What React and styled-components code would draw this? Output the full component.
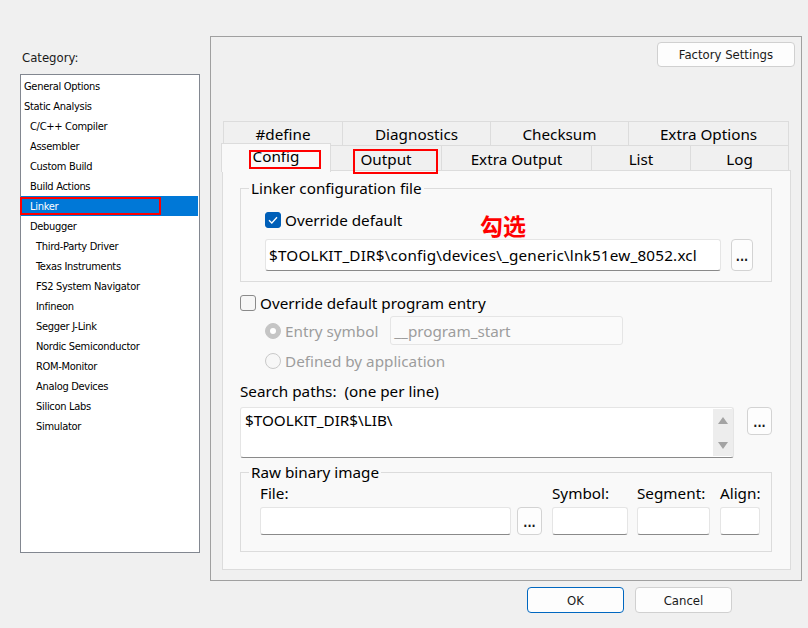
import React from 'react';
import styled, { createGlobalStyle } from 'styled-components';

const GlobalStyle = createGlobalStyle`
   html, body {
      margin: 0;
      padding: 0;
      background: #f0f0f0;
      width: 808px;
      height: 628px;
      overflow: hidden;
   }
   * {
      box-sizing: border-box;
   }
`;

const uiFont = `'Noto Sans', 'Open Sans', sans-serif`;
const dlgFont = `'DejaVu Sans Condensed', 'DejaVu Sans', 'Liberation Sans', sans-serif`;

const categories = [
   { name: 'General Options', level: 0 },
   { name: 'Static Analysis', level: 0 },
   { name: 'C/C++ Compiler', level: 1 },
   { name: 'Assembler', level: 1 },
   { name: 'Custom Build', level: 1 },
   { name: 'Build Actions', level: 1 },
   { name: 'Linker', level: 1, selected: true, marked: true },
   { name: 'Debugger', level: 1 },
   { name: 'Third-Party Driver', level: 2 },
   { name: 'Texas Instruments', level: 2 },
   { name: 'FS2 System Navigator', level: 2 },
   { name: 'Infineon', level: 2 },
   { name: 'Segger J-Link', level: 2 },
   { name: 'Nordic Semiconductor', level: 2 },
   { name: 'ROM-Monitor', level: 2 },
   { name: 'Analog Devices', level: 2 },
   { name: 'Silicon Labs', level: 2 },
   { name: 'Simulator', level: 2 },
];

const backTabs = [
   { label: '#define', width: 119 },
   { label: 'Diagnostics', width: 148 },
   { label: 'Checksum', width: 138 },
   { label: 'Extra Options', width: 160 },
];

const frontTabs = [
   { label: 'Config', width: 107, selected: true, mark: { left: 27, top: 6, width: 72, height: 19 } },
   { label: 'Output', width: 111, mark: { left: 22, top: 3, width: 85, height: 25 } },
   { label: 'Extra Output', width: 150 },
   { label: 'List', width: 99 },
   { label: 'Log', width: 98 },
];

const App = () => {
   return (
      <>
         <GlobalStyle />
         <Dialog>
            <LeftColumn>
               <CategoryLabel>Category:</CategoryLabel>
               <CategoryList>
                  {categories.map((item, index) => (
                     <CategoryItem key={index} $level={item.level} $selected={item.selected}>
                        {item.name}
                        {item.marked && <RedMark style={{ left: -1, top: 1, width: 141, height: 18 }} />}
                     </CategoryItem>
                  ))}
               </CategoryList>
            </LeftColumn>

            <Panel>
               <TopBar>
                  <DlgButton $width={138}>Factory Settings</DlgButton>
               </TopBar>

               <TabArea>
                  <TabRow>
                     {backTabs.map((tab) => (
                        <Tab key={tab.label} $width={tab.width} $back>
                           {tab.label}
                        </Tab>
                     ))}
                  </TabRow>
                  <TabRow>
                     {frontTabs.map((tab) => (
                        <Tab key={tab.label} $width={tab.width} $selected={tab.selected}>
                           {tab.label}
                           {tab.mark && <RedMark style={tab.mark} />}
                        </Tab>
                     ))}
                  </TabRow>

                  <TabContent>
                     <GroupBox>
                        <Legend>Linker configuration file</Legend>
                        <CheckRow $indent={24} $mt={12}>
                           <CheckBox $checked>
                              <svg width='10' height='8' viewBox='0 0 10 8'>
                                 <path d='M1 4.2 L3.8 7 L9 1.2' fill='none' stroke='#fff' strokeWidth='1.3' />
                              </svg>
                           </CheckBox>
                           <span>Override default</span>
                           <Annotation>勾选</Annotation>
                        </CheckRow>
                        <FieldRow $indent={24} $mt={9}>
                           <TextInput $width={456} $height={32} $spacing={0.2}>
                              $TOOLKIT_DIR$\config\devices\_generic\lnk51ew_8052.xcl
                           </TextInput>
                           <DotsButton $height={32} $width={22} $ml={10}>...</DotsButton>
                        </FieldRow>
                     </GroupBox>

                     <CheckRow $mt={11}>
                        <CheckBox />
                        <span>Override default program entry</span>
                     </CheckRow>

                     <OptionRow $mt={3}>
                        <Radio $on />
                        <OptionText>Entry symbol</OptionText>
                        <TextInput $width={233} $height={29} $disabled $ml={12}>
                           __program_start
                        </TextInput>
                     </OptionRow>
                     <OptionRow $mt={6} $height={20}>
                        <Radio />
                        <OptionText>Defined by application</OptionText>
                     </OptionRow>

                     <PlainLabel $mt={10}>Search paths:&nbsp; (one per line)</PlainLabel>
                     <FieldRow $mt={6} $align='flex-start'>
                        <PathBox>
                           <PathText>$TOOLKIT_DIR$\LIB\</PathText>
                           <ScrollBar>
                              <Arrow $up />
                              <Arrow />
                           </ScrollBar>
                        </PathBox>
                        <DotsButton $height={28} $width={25} $ml={13}>...</DotsButton>
                     </FieldRow>

                     <GroupBox $mt={4} $pb={16}>
                        <Legend>Raw binary image</Legend>
                        <RawGrid>
                           <PlainLabel>File:</PlainLabel>
                           <span />
                           <PlainLabel>Symbol:</PlainLabel>
                           <PlainLabel>Segment:</PlainLabel>
                           <PlainLabel>Align:</PlainLabel>
                           <TextInput $width={251} $height={28} />
                           <DotsButton $height={28} $width={25}>...</DotsButton>
                           <TextInput $width={76} $height={28} />
                           <TextInput $width={73} $height={28} />
                           <TextInput $width={40} $height={28} />
                        </RawGrid>
                     </GroupBox>
                  </TabContent>
               </TabArea>
            </Panel>

            <Footer>
               <DlgButton $width={97} $height={26} $default>OK</DlgButton>
               <DlgButton $width={97} $height={26}>Cancel</DlgButton>
            </Footer>
         </Dialog>
      </>
   );
};

const Dialog = styled.div`
   display: grid;
   grid-template-columns: 180px 592px;
   grid-template-rows: 545px auto;
   column-gap: 10px;
   padding: 36px 0 0 20px;
   font-family: ${uiFont};
   color: #000;
`;

const LeftColumn = styled.div`
   display: flex;
   flex-direction: column;
`;

const CategoryLabel = styled.div`
   font-family: ${dlgFont};
   font-size: 13px;
   line-height: 16px;
   margin: 14px 0 8px 2px;
   color: #1a1a1a;
`;

const CategoryList = styled.div`
   height: 479px;
   background: #fff;
   border: 1px solid #828790;
   padding: 1px 1px 0 0;
`;

const CategoryItem = styled.div`
   position: relative;
   height: 20px;
   line-height: 20px;
   padding-top: 1px;
   font-family: ${dlgFont};
   font-size: 11px;
   letter-spacing: -0.3px;
   padding-left: ${(p) => 3 + p.$level * 6}px;
   background: ${(p) => (p.$selected ? '#0078d7' : 'transparent')};
   color: ${(p) => (p.$selected ? '#fff' : '#000')};
   white-space: nowrap;
`;

const RedMark = styled.span`
   position: absolute;
   border: 2px solid #ff0000;
   pointer-events: none;
   z-index: 3;
`;

const Panel = styled.div`
   display: flex;
   flex-direction: column;
   border: 1px solid #a0a0a0;
   background: #f0f0f0;
   padding: 5px 6px 10px 11px;
`;

const TopBar = styled.div`
   display: flex;
   justify-content: flex-end;
   margin-bottom: 55px;
`;

const DlgButton = styled.div`
   width: ${(p) => p.$width}px;
   height: ${(p) => p.$height || 25}px;
   display: flex;
   align-items: center;
   justify-content: center;
   font-family: ${dlgFont};
   font-size: 13px;
   color: #1a1a1a;
   background: #fdfdfd;
   border: 1px solid ${(p) => (p.$default ? '#0067c0' : '#d0d0d0')};
   border-radius: 4px;
`;

const TabArea = styled.div`
   display: flex;
   flex-direction: column;
   flex: 1;
   margin-right: 4px;
`;

const TabRow = styled.div`
   display: flex;
   padding-left: 1px;
   margin-top: -1px;
   position: relative;
   &:last-of-type {
      z-index: 2;
   }
`;

const Tab = styled.div`
   position: relative;
   width: ${(p) => p.$width + (p.$selected ? 3 : 1)}px;
   height: ${(p) => (p.$selected ? 29 : p.$back ? 25 : 26)}px;
   margin: ${(p) => (p.$selected ? '-2px -1px -1px -2px' : '0 -1px 0 0')};
   display: flex;
   align-items: center;
   justify-content: center;
   padding-bottom: ${(p) => (p.$selected ? 4 : 0)}px;
   padding-top: ${(p) => (!p.$selected && !p.$back ? 2 : 0)}px;
   font-size: 15.25px;
   background: ${(p) => (p.$selected ? '#f9f9f9' : '#f0f0f0')};
   border: 1px solid #dcdcdc;
   border-bottom: ${(p) => (p.$selected ? 'none' : '1px solid #dcdcdc')};
   z-index: ${(p) => (p.$selected ? 2 : 1)};
`;

const TabContent = styled.div`
   flex: 1;
   margin-top: -1px;
   background: #f9f9f9;
   border: 1px solid #dcdcdc;
   padding: 7px 18px 0 17px;
   display: flex;
   flex-direction: column;
   font-size: 15.25px;
`;

const GroupBox = styled.fieldset`
   margin: ${(p) => p.$mt || 0}px 0 0 0;
   padding: 0 18px ${(p) => p.$pb || 10}px 0;
   border: 1px solid #dcdcdc;
   min-width: 0;
`;

const Legend = styled.legend`
   margin-left: 8px;
   padding: 0 2px;
   font-size: 15.25px;
   line-height: 20px;
`;

const CheckRow = styled.div`
   position: relative;
   display: flex;
   align-items: center;
   gap: 4px;
   height: 20px;
   margin-top: ${(p) => p.$mt || 0}px;
   padding-left: ${(p) => p.$indent || 0}px;
`;

const CheckBox = styled.span`
   width: 16px;
   height: 16px;
   flex: none;
   display: flex;
   align-items: center;
   justify-content: center;
   border-radius: 3px;
   background: ${(p) => (p.$checked ? '#005fb8' : '#f6f6f6')};
   border: 1px solid ${(p) => (p.$checked ? '#005fb8' : '#8a8a8a')};
`;

const Annotation = styled.span`
   position: absolute;
   left: 239px;
   top: 1px;
   font-family: 'Noto Sans CJK SC', sans-serif;
   font-weight: 700;
   font-size: 23px;
   line-height: 28px;
   color: #ff0000;
`;

const FieldRow = styled.div`
   display: flex;
   align-items: ${(p) => p.$align || 'center'};
   margin-top: ${(p) => p.$mt || 0}px;
   padding-left: ${(p) => p.$indent || 0}px;
`;

const TextInput = styled.div`
   width: ${(p) => p.$width}px;
   height: ${(p) => p.$height}px;
   margin-left: ${(p) => p.$ml || 0}px;
   flex: none;
   display: flex;
   align-items: center;
   padding-left: 3px;
   white-space: nowrap;
   overflow: hidden;
   font-size: 15.25px;
   letter-spacing: ${(p) => p.$spacing || 0}px;
   color: ${(p) => (p.$disabled ? '#9d9d9d' : '#000')};
   background: ${(p) => (p.$disabled ? '#fafafa' : '#fff')};
   border: 1px solid #e5e5e5;
   border-bottom-color: ${(p) => (p.$disabled ? '#e5e5e5' : '#8a8a8a')};
   border-radius: 3px;
`;

const DotsButton = styled.div`
   width: ${(p) => p.$width}px;
   height: ${(p) => p.$height}px;
   margin-left: ${(p) => p.$ml || 0}px;
   flex: none;
   display: flex;
   align-items: center;
   justify-content: center;
   padding-top: 4px;
   font-family: ${dlgFont};
   font-size: 12px;
   font-weight: 700;
   color: #1a1a1a;
   background: #fdfdfd;
   border: 1px solid #d3d3d3;
   border-radius: 4px;
`;

const OptionRow = styled.div`
   display: flex;
   align-items: center;
   height: ${(p) => p.$height || 29}px;
   margin-top: ${(p) => p.$mt || 0}px;
   padding-left: 25px;
`;

const Radio = styled.span`
   width: 16px;
   height: 16px;
   flex: none;
   border-radius: 50%;
   background: ${(p) => (p.$on ? '#c5c5c5' : '#f7f7f7')};
   border: 1px solid ${(p) => (p.$on ? '#c5c5c5' : '#c9c9c9')};
   display: flex;
   align-items: center;
   justify-content: center;
   &::after {
      content: '';
      width: 6px;
      height: 6px;
      border-radius: 50%;
      background: #fff;
      display: ${(p) => (p.$on ? 'block' : 'none')};
   }
`;

const OptionText = styled.span`
   margin-left: 4px;
   color: #9d9d9d;
`;

const PlainLabel = styled.div`
   line-height: 20px;
   margin-top: ${(p) => p.$mt || 0}px;
   white-space: nowrap;
`;

const PathBox = styled.div`
   width: 494px;
   height: 51px;
   display: flex;
   background: #fff;
   border: 1px solid #e5e5e5;
   border-bottom-color: #8a8a8a;
   border-radius: 3px;
   overflow: hidden;
`;

const PathText = styled.div`
   flex: 1;
   padding: 2px 0 0 4px;
   line-height: 20px;
`;

const ScrollBar = styled.div`
   width: 20px;
   margin: 1px 0;
   background: #ededed;
   display: flex;
   flex-direction: column;
   justify-content: space-between;
   align-items: center;
   padding: 8px 0 7px;
`;

const Arrow = styled.span`
   width: 0;
   height: 0;
   border-left: 5px solid transparent;
   border-right: 5px solid transparent;
   border-bottom: ${(p) => (p.$up ? '7px solid #a3a3a3' : 'none')};
   border-top: ${(p) => (p.$up ? 'none' : '7px solid #a3a3a3')};
`;

const RawGrid = styled.div`
   display: grid;
   grid-template-columns: 257px 35px 85px 83px 40px;
   row-gap: 4px;
   padding-left: 19px;
   margin-top: 1px;
   align-items: end;
`;

const Footer = styled.div`
   grid-column: 1 / -1;
   display: flex;
   justify-content: flex-end;
   gap: 11px;
   padding-right: 70px;
   margin-top: 6px;
`;

export default App;
